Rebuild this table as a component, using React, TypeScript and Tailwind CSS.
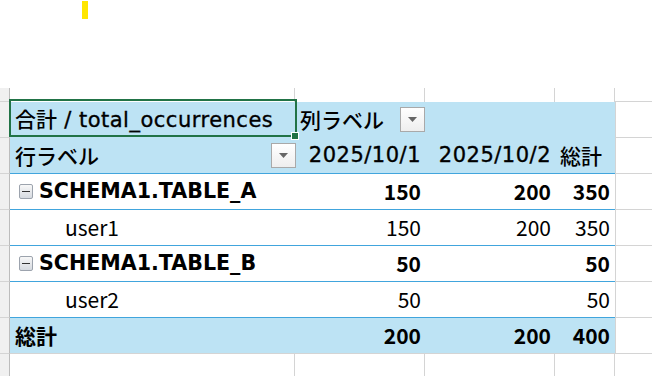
import React from 'react'

const cjk = "font-['Noto_Sans_CJK_JP','Noto_Sans',sans-serif]"
const lat = "font-['DejaVu_Sans','Noto_Sans_CJK_JP',sans-serif] tracking-[0.5px] [-webkit-text-stroke:0.35px_black]"

// one spreadsheet row: gutter + pivot cells + the trailing column E
function Row({
  line = 'border-[#d4d4d4]',
  fill = 'bg-white',
  children,
}: {
  line?: string
  fill?: string
  children?: React.ReactNode
}) {
  return (
    <div className="flex h-[36px]">
      <div className="w-[10px] shrink-0 bg-[#f0f0f0] border-r border-b border-r-[#bcbcbc] border-b-[#d4d4d4]" />
      <div
        className={`w-[605px] shrink-0 grid grid-cols-[286px_130px_130px_59px] border-b ${line} ${fill}`}
      >
        {children}
      </div>
      <div className="flex-1 border-l border-b border-[#d4d4d4] bg-white" />
    </div>
  )
}

function Dropdown() {
  return (
    <div className="w-[25px] h-[25px] border border-[#a9a9a9] bg-gradient-to-b from-white to-[#eeeeee] flex items-center justify-center">
      <svg width="9" height="5" viewBox="0 0 9 5">
        <path d="M0 0h9L4.5 5z" fill="#666" />
      </svg>
    </div>
  )
}

function Minus() {
  return (
    <div className="w-[14px] h-[15px] border border-[#9ca3ad] rounded-[2px] bg-gradient-to-b from-[#f8f8f8] to-[#d6dae0] flex items-center justify-center">
      <div className="w-[8px] h-[1px] bg-[#333]" />
    </div>
  )
}

const num = 'flex items-center justify-end pr-[5px]'
const date = `flex items-center justify-end pr-[5px] ${lat}`

const DATA = [
  { name: 'SCHEMA1.TABLE_A', d1: '150', d2: '200', total: '350', user: 'user1' },
  { name: 'SCHEMA1.TABLE_B', d1: '50', d2: '', total: '50', user: 'user2' },
]

export default function App() {
  return (
    <div
      className={`relative w-[652px] h-[376px] overflow-hidden bg-white text-black text-[21px] leading-none ${cjk}`}
    >
      {/* top strip */}
      <div className="h-[87px]">
        <div className="ml-[82px] mt-[1px] w-[6px] h-[18px] bg-[#ffe600]" />
      </div>

      {/* blank row above the pivot */}
      <div className="flex h-[14px]">
        <div className="w-[10px] shrink-0 bg-[#f0f0f0] border-r border-b border-r-[#bcbcbc] border-b-[#d4d4d4]" />
        <div className="w-[285px] shrink-0 border-r border-[#d4d4d4]" />
        <div className="w-[130px] shrink-0 border-r border-[#d4d4d4]" />
        <div className="w-[130px] shrink-0 border-r border-[#d4d4d4]" />
        <div className="w-[60px] shrink-0 border-r border-[#d4d4d4]" />
        <div className="flex-1 border-b border-[#d4d4d4]" />
      </div>

      {/* header row 1 */}
      <Row line="border-[#bde3f4]" fill="bg-[#bde3f4]">
        <div className="flex items-center pl-[5px]">
          <span className="font-medium whitespace-pre">
            合計<span className={lat}> / total_occurrences</span>
          </span>
        </div>
        <div className="col-span-3 flex items-center pl-[4px] font-medium">
          <span className="w-[100px]">列ラベル</span>
          <Dropdown />
        </div>
      </Row>

      {/* header row 2 */}
      <Row line="border-[#41a5dd]" fill="bg-[#bde3f4]">
        <div className="flex items-center justify-between pl-[5px] font-medium">
          <span>行ラベル</span>
          <Dropdown />
        </div>
        <div className={date}>2025/10/1</div>
        <div className={date}>2025/10/2</div>
        <div className="flex items-center pl-[4px] font-medium">総計</div>
      </Row>

      {DATA.map(r => (
        <React.Fragment key={r.name}>
          <Row line="border-[#41a5dd]">
            <div className="flex items-center gap-[6px] pl-[9px]">
              <Minus />
              <span className="font-['DejaVu_Sans',sans-serif] font-bold text-[20.6px]">{r.name}</span>
            </div>
            <div className={`${num} font-bold`}>{r.d1}</div>
            <div className={`${num} font-bold`}>{r.d2}</div>
            <div className={`${num} font-bold`}>{r.total}</div>
          </Row>
          <Row line="border-[#41a5dd]">
            <div className="flex items-center pl-[55px]">{r.user}</div>
            <div className={num}>{r.d1}</div>
            <div className={num}>{r.d2}</div>
            <div className={num}>{r.total}</div>
          </Row>
        </React.Fragment>
      ))}

      {/* grand total */}
      <Row line="border-[#d4d4d4]" fill="bg-[#bde3f4]">
        <div className="flex items-center pl-[5px] font-bold">総計</div>
        <div className={`${num} font-bold`}>200</div>
        <div className={`${num} font-bold`}>200</div>
        <div className={`${num} font-bold`}>400</div>
      </Row>

      {/* blank row below */}
      <div className="flex h-[36px]">
        <div className="w-[10px] shrink-0 bg-[#f0f0f0] border-r border-r-[#bcbcbc]" />
        <div className="w-[285px] shrink-0 border-r border-[#d4d4d4]" />
        <div className="w-[130px] shrink-0 border-r border-[#d4d4d4]" />
        <div className="w-[130px] shrink-0 border-r border-[#d4d4d4]" />
        <div className="w-[60px] shrink-0 border-r border-[#d4d4d4]" />
        <div className="flex-1" />
      </div>

      {/* active cell selection */}
      <div className="absolute left-[9px] top-[99px] w-[288px] h-[38px] border-2 border-[#217346]" />
      <div className="absolute left-[292px] top-[133px] w-[6px] h-[6px] bg-[#217346] outline outline-1 outline-white" />
    </div>
  )
}
